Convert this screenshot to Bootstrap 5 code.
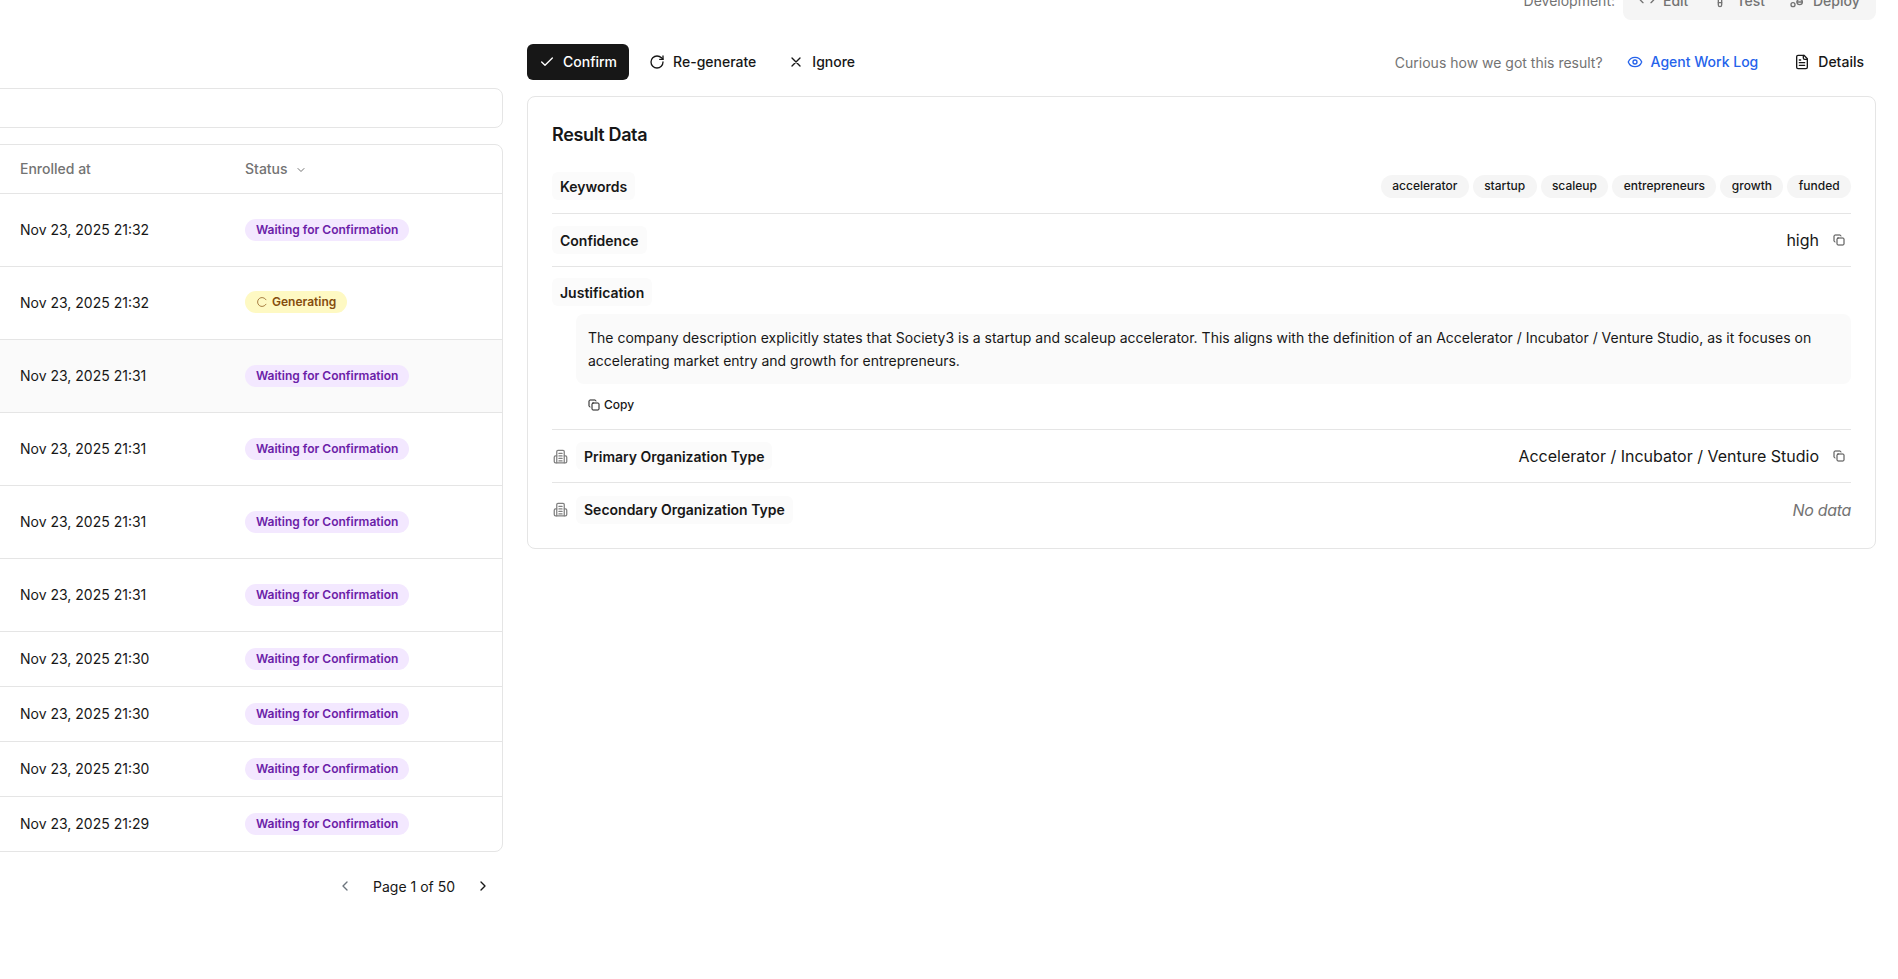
<!DOCTYPE html>
<html>
  <head>
    <title>Result Data</title>
    <link href="https://cdn.jsdelivr.net/npm/bootstrap@5.3.3/dist/css/bootstrap.min.css" rel="stylesheet">
    <style>
      html, body { height: 100%; overflow: hidden; }
      body { font-family: Inter, "Liberation Sans", sans-serif; font-size: 14px; color: #171717; background: #fff; }
      svg.ico { fill: none; stroke: currentColor; stroke-width: 2; stroke-linecap: round; stroke-linejoin: round; flex: none; }

      .dev-bar { margin: -20px 22px 0 0; height: 40px; }
      .dev-label { color: #737373; margin-right: 8px; }
      .dev-tabs { background: #f5f5f5; border-radius: 8px; width: 253px; height: 40px; padding-left: 16px; color: #737373; font-weight: 500; }
      .dev-tab { gap: 8px; margin-right: 24px; }

      .page-main { margin: 24px 22px 0 -40px; gap: 24px; }
      .left-pane { width: 543px; flex: none; }
      .filter-box { height: 40px; margin: 44px 0 16px; border: 1px solid #e5e5e5; border-radius: 8px; }
      .table-box { border: 1px solid #e5e5e5; border-radius: 8px; overflow: hidden; }
      .enroll-table { margin: 0; table-layout: fixed; border-collapse: separate; border-spacing: 0; }
      .enroll-table th, .enroll-table td { padding: 0 16px 2px; vertical-align: middle; border-bottom: 1px solid #e5e5e5; box-shadow: none; font-size: 14px; color: #171717; }
      .enroll-table tr:last-child td { border-bottom: 0; }
      .enroll-table th { height: 49px; font-weight: 500; color: #737373; }
      .enroll-table .tall td { height: 73px; }
      .enroll-table .short td { height: 55px; }
      .enroll-table .short:last-child td { height: 54px; }
      .enroll-table .hovered td { background: #fafafa; }
      .col-pad { width: 43px; }
      .col-enrolled { width: 225px; }
      .status-pill { display: inline-flex; align-items: center; gap: 4px; height: 22px; padding: 0 11px; border-radius: 11px; font-size: 12px; font-weight: 600; line-height: 1; }
      .pill-wait { background: #f3e8ff; color: #6b21a8; }
      .pill-gen { background: #fef9c3; color: #854d0e; }
      .pill-gen svg { opacity: .7; }
      .pager { height: 68px; margin-right: 12px; gap: 20px; }

      .right-pane { min-width: 0; }
      .action-bar { height: 36px; margin-bottom: 16px; }
      .act-btn { display: inline-flex; align-items: center; gap: 8px; height: 36px; padding: 0 12px 1px; border: 0; border-radius: 6px; font-size: 14px; font-weight: 500; color: #171717; background: transparent; }
      .act-btn.is-dark { background: #171717; color: #fff; }
      .act-link { color: #2563eb; }
      .act-gap { margin-left: 12px; }
      .curious { color: #737373; margin-right: 12px; }
      .result-card { border: 1px solid #e5e5e5; border-radius: 8px; padding: 24px 24px 12px 24px; }
      .result-title { font-size: 18px; font-weight: 600; line-height: 28px; letter-spacing: -.35px; margin: 0 0 11px; }
      .field-row { border-bottom: 1px solid #e5e5e5; min-height: 53px; }
      .field-row:last-child { border-bottom: 0; }
      .field-row.first-row { min-height: 54px; padding-bottom: 1px; }
      .field-label { background: #fbfbfb; border-radius: 6px; padding: 0 8px; height: 28px; display: inline-flex; align-items: center; font-weight: 600; }
      .kw-chip { background: #f5f5f5; border-radius: 12px; height: 23px; padding: 0 11.400px; display: inline-flex; align-items: center; font-size: 12px; font-weight: 500; }
      .field-value { font-size: 16px; }
      .copy-ico { color: #404040; margin: 0 6px 0 14px; }
      .just-row { padding-top: 7px; }
      .just-box { background: #fafafa; border-radius: 8px; margin: 8px 0 0 24px; padding: 12px; line-height: 23px; }
      .copy-link { margin: 11px 0 14px 36px; gap: 4px; font-size: 12px; font-weight: 500; height: 20px; }
      .org-ico { color: #808080; margin: 0 8px 0 1px; }
      .no-data { font-size: 16px; font-style: italic; color: #737373; letter-spacing: -.3px; }
    </style>
  </head>
  <body>
    <svg width="0" height="0" class="position-absolute">
      <symbol id="i-copy" viewBox="0 0 24 24"><rect x="8" y="8" width="14" height="14" rx="2"/><path d="M4 16c-1.100 0-2-.9-2-2V4c0-1.100.9-2 2-2h10c1.100 0 2 .9 2 2"/></symbol>
      <symbol id="i-org" viewBox="0 0 24 24"><path d="M6 22V4a2 2 0 0 1 2-2h8a2 2 0 0 1 2 2v18"/><path d="M6 11H4a2 2 0 0 0-2 2v7a2 2 0 0 0 2 2h16a2 2 0 0 0 2-2v-7a2 2 0 0 0-2-2h-2"/><path d="M9.500 7h5M9.500 11h5M9.500 15h5M9.500 19h5"/></symbol>
    </svg>

    <div class="dev-bar d-flex justify-content-end align-items-center">
      <span class="dev-label">Development:</span>
      <div class="dev-tabs d-flex align-items-center">
        <span class="dev-tab d-flex align-items-center"><svg class="ico" width="16" height="16" viewBox="0 0 24 24"><path d="m18 16 4-4-4-4"/><path d="m6 8-4 4 4 4"/></svg>Edit</span>
        <span class="dev-tab d-flex align-items-center"><svg class="ico" width="16" height="16" viewBox="0 0 24 24"><path d="M14.500 2v17.500a2.500 2.500 0 0 1-5 0V2"/><path d="M8.500 2h7M14.500 16h-5"/></svg>Test</span>
        <span class="dev-tab d-flex align-items-center"><svg class="ico" width="16" height="16" viewBox="0 0 24 24"><circle cx="6" cy="19" r="3"/><circle cx="16" cy="15" r="4"/><path d="M16 4v7M12 15h8"/></svg>Deploy</span>
      </div>
    </div>

    <div class="page-main d-flex">
      <div class="left-pane">
        <div class="filter-box"></div>
        <div class="table-box">
          <table class="table enroll-table">
            <colgroup><col class="col-pad"><col class="col-enrolled"><col></colgroup>
            <thead>
              <tr><th></th><th>Enrolled at</th><th>Status <svg class="ico ms-1" width="12" height="12" viewBox="0 0 24 24"><path d="m6 9 6 6 6-6"/></svg></th></tr>
            </thead>
            <tbody>
              <tr class="tall"><td></td><td>Nov 23, 2025 21:32</td><td><span class="status-pill pill-wait">Waiting for Confirmation</span></td></tr>
              <tr class="tall"><td></td><td>Nov 23, 2025 21:32</td><td><span class="status-pill pill-gen"><svg class="ico" width="12" height="12" viewBox="0 0 24 24"><path d="M20 7.500a9 9 0 1 0 0 9"/></svg>Generating</span></td></tr>
              <tr class="tall hovered"><td></td><td>Nov 23, 2025 21:31</td><td><span class="status-pill pill-wait">Waiting for Confirmation</span></td></tr>
              <tr class="tall"><td></td><td>Nov 23, 2025 21:31</td><td><span class="status-pill pill-wait">Waiting for Confirmation</span></td></tr>
              <tr class="tall"><td></td><td>Nov 23, 2025 21:31</td><td><span class="status-pill pill-wait">Waiting for Confirmation</span></td></tr>
              <tr class="tall"><td></td><td>Nov 23, 2025 21:31</td><td><span class="status-pill pill-wait">Waiting for Confirmation</span></td></tr>
              <tr class="short"><td></td><td>Nov 23, 2025 21:30</td><td><span class="status-pill pill-wait">Waiting for Confirmation</span></td></tr>
              <tr class="short"><td></td><td>Nov 23, 2025 21:30</td><td><span class="status-pill pill-wait">Waiting for Confirmation</span></td></tr>
              <tr class="short"><td></td><td>Nov 23, 2025 21:30</td><td><span class="status-pill pill-wait">Waiting for Confirmation</span></td></tr>
              <tr class="short"><td></td><td>Nov 23, 2025 21:29</td><td><span class="status-pill pill-wait">Waiting for Confirmation</span></td></tr>
            </tbody>
          </table>
        </div>
        <div class="pager d-flex justify-content-end align-items-center">
          <svg class="ico text-secondary" width="16" height="16" viewBox="0 0 24 24"><path d="m15 18-6-6 6-6"/></svg>
          <span>Page 1 of 50</span>
          <svg class="ico" width="16" height="16" viewBox="0 0 24 24"><path d="m9 18 6-6-6-6"/></svg>
        </div>
      </div>

      <div class="right-pane flex-grow-1">
        <div class="action-bar d-flex align-items-center">
          <button class="act-btn is-dark" type="button"><svg class="ico" width="16" height="16" viewBox="0 0 24 24"><path d="M20 6 9 17l-5-5"/></svg>Confirm</button>
          <button class="act-btn ms-2" type="button"><svg class="ico" width="16" height="16" viewBox="0 0 24 24"><path d="M21 12a9 9 0 1 1-9-9c2.520 0 4.930 1 6.740 2.740L21 8"/><path d="M21 3v5h-5"/></svg>Re-generate</button>
          <button class="act-btn ms-2" type="button"><svg class="ico" width="16" height="16" viewBox="0 0 24 24"><path d="M18 6 6 18M6 6l12 12"/></svg>Ignore</button>
          <span class="curious ms-auto">Curious how we got this result?</span>
          <button class="act-btn act-link" type="button"><svg class="ico" width="16" height="16" viewBox="0 0 24 24"><path d="M2.062 12.348a1 1 0 0 1 0-.696 10.750 10.750 0 0 1 19.876 0 1 1 0 0 1 0 .696 10.750 10.750 0 0 1-19.876 0"/><circle cx="12" cy="12" r="3"/></svg>Agent Work Log</button>
          <button class="act-btn act-gap" type="button"><svg class="ico" width="16" height="16" viewBox="0 0 24 24"><path d="M15 2H6a2 2 0 0 0-2 2v16a2 2 0 0 0 2 2h12a2 2 0 0 0 2-2V7Z"/><path d="M14 2v4a2 2 0 0 0 2 2h4"/><path d="M10 9H8M16 13H8M16 17H8"/></svg>Details</button>
        </div>

        <div class="result-card">
          <h2 class="result-title">Result Data</h2>
          <div class="field-row first-row d-flex align-items-center justify-content-between">
            <span class="field-label">Keywords</span>
            <div class="d-flex gap-1">
              <span class="kw-chip">accelerator</span>
              <span class="kw-chip">startup</span>
              <span class="kw-chip">scaleup</span>
              <span class="kw-chip">entrepreneurs</span>
              <span class="kw-chip">growth</span>
              <span class="kw-chip">funded</span>
            </div>
          </div>
          <div class="field-row d-flex align-items-center justify-content-between">
            <span class="field-label">Confidence</span>
            <div class="d-flex align-items-center">
              <span class="field-value">high</span>
              <svg class="ico copy-ico" width="12" height="12" viewBox="0 0 24 24"><use href="#i-copy"/></svg>
            </div>
          </div>
          <div class="field-row just-row">
            <span class="field-label mt-1">Justification</span>
            <div class="just-box">The company description explicitly states that Society3 is a startup and scaleup accelerator. This aligns with the definition of an Accelerator / Incubator / Venture Studio, as it focuses on accelerating market entry and growth for entrepreneurs.</div>
            <div class="copy-link d-flex align-items-center"><svg class="ico" width="12" height="12" viewBox="0 0 24 24"><use href="#i-copy"/></svg>Copy</div>
          </div>
          <div class="field-row d-flex align-items-center">
            <svg class="ico org-ico" width="15" height="15" viewBox="0 0 24 24"><use href="#i-org"/></svg>
            <span class="field-label">Primary Organization Type</span>
            <div class="d-flex align-items-center ms-auto">
              <span class="field-value">Accelerator / Incubator / Venture Studio</span>
              <svg class="ico copy-ico" width="12" height="12" viewBox="0 0 24 24"><use href="#i-copy"/></svg>
            </div>
          </div>
          <div class="field-row d-flex align-items-center">
            <svg class="ico org-ico" width="15" height="15" viewBox="0 0 24 24"><use href="#i-org"/></svg>
            <span class="field-label">Secondary Organization Type</span>
            <span class="no-data ms-auto">No data</span>
          </div>
        </div>
      </div>
    </div>
    <script src="https://cdn.jsdelivr.net/npm/bootstrap@5.3.3/dist/js/bootstrap.bundle.min.js"></script>
  </body>
</html>
